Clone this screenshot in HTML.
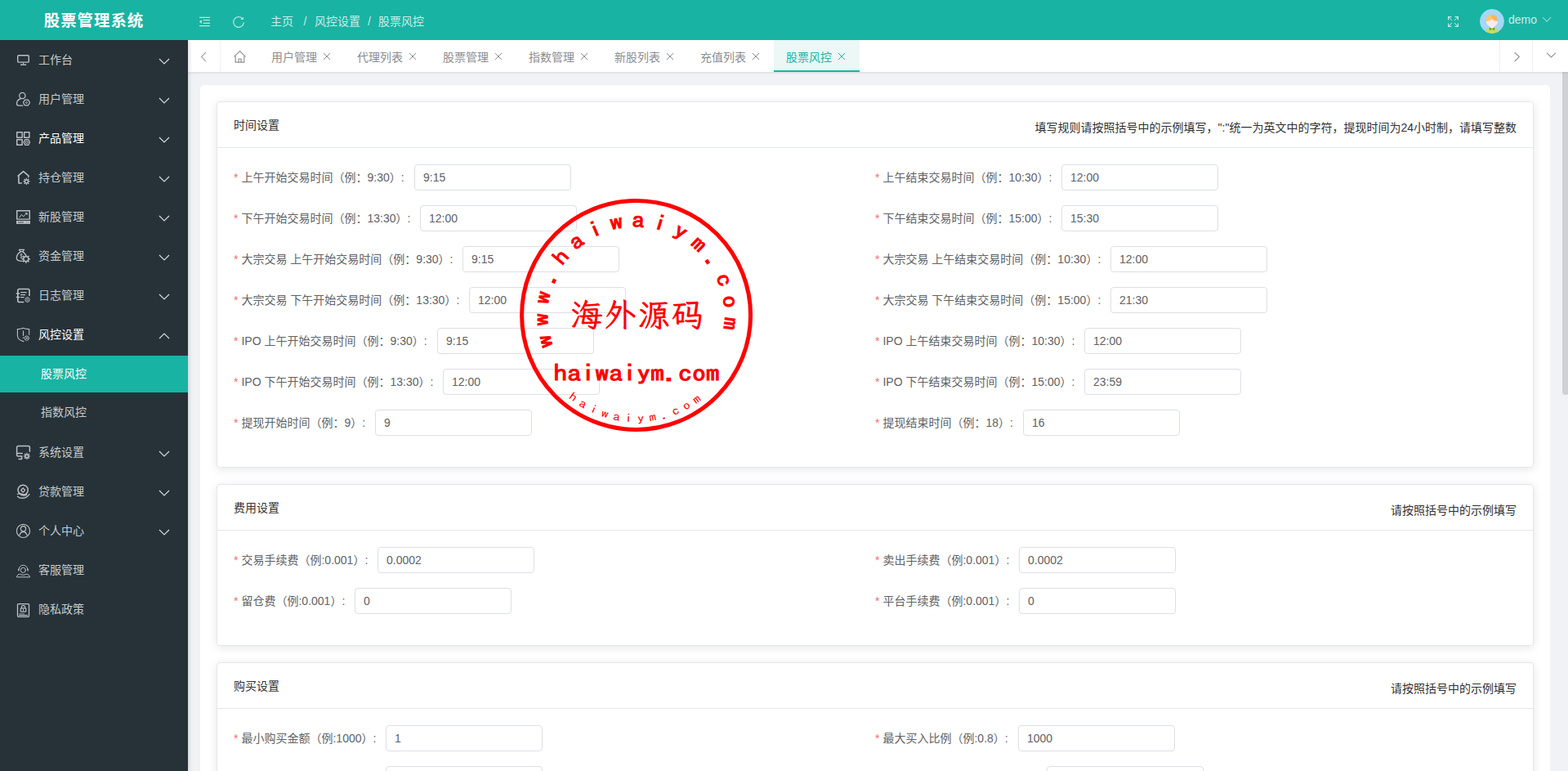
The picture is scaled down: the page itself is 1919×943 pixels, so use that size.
<!DOCTYPE html>
<html lang="zh-CN">
<head>
<meta charset="utf-8">
<title>股票管理系统</title>
<style>
*{box-sizing:border-box;margin:0;padding:0}
html,body{width:1919px;height:943px;overflow:hidden;background:#f1f2f6;font-family:"Liberation Sans","Noto Sans CJK SC",sans-serif;font-size:14px;color:#606266}
ul{list-style:none}
/* header */
.navbar{position:absolute;left:0;top:0;width:1919px;height:49px;background:#19b3a3;color:#fff;z-index:30}
.brand{position:absolute;left:0;top:0;width:230px;height:49px;line-height:51px;text-align:center;font-size:19.4px;font-weight:700;letter-spacing:1px;color:#fff}
.nav-ico{position:absolute}
.crumb{position:absolute;left:331px;top:0;height:49px;line-height:52px;font-size:14px;color:rgba(255,255,255,.78);white-space:nowrap}
.crumb i{font-style:normal;margin:0 9px 0 12px}
.user{position:absolute;left:1846px;top:0;line-height:48px;font-size:14px;color:rgba(255,255,255,.78)}
.avatar{position:absolute;left:1811px;top:11px;width:30px;height:30px;border-radius:50%;overflow:hidden}
/* sidebar */
.sidebar{position:absolute;left:0;top:49px;width:230px;height:894px;background:#263238;z-index:20;box-shadow:1px 0 5px rgba(0,21,41,.18)}
.menu li.item{position:relative;height:48px;line-height:48px;color:#c6cacd;font-size:14px;padding-left:47px;white-space:nowrap}
.menu li.item.hl{color:#fff}
.menu li.item svg.ic{position:absolute;left:14px;top:9px;width:30px;height:30px}
.menu li.item svg.ar{position:absolute;left:194.2px;top:22px;width:14px;height:8px;overflow:visible}
.menu li.sub{height:45px;line-height:45px;margin:2px 0;padding-left:50px;color:#c6cacd;font-size:14px}
.menu li.sub.active{background:#19b3a3;color:#fff}
/* tabs */
.tabs{position:absolute;left:230px;top:49px;width:1689px;height:39px;background:#fff;box-shadow:0 1px 3px rgba(0,0,0,.12);z-index:10}
.tabs .btn{position:absolute;top:0;height:39px}
.tab{position:absolute;top:0;height:39px;line-height:42px;font-size:14px;color:#8a8d92;white-space:nowrap}
.tab .x{display:inline-block;width:10px;height:10px;margin-left:7px;position:relative;top:-.6px}
.tab.active{color:#19b3a3}
.tabbg{position:absolute;left:717px;top:0;width:105px;height:39px;background:#ebf8f6;border-bottom:2px solid #19b3a3}
/* content */
.main{position:absolute;left:245px;top:104px;width:1652px;height:900px;background:#fff;border-radius:5px}
.card{position:absolute;left:20px;width:1612px;background:#fff;border:1px solid #e4e7ed;border-radius:4px;box-shadow:0 2px 12px 0 rgba(0,0,0,.1)}
.card .hd{height:56px;border-bottom:1px solid #e4e7ed;position:relative;color:#303133;font-size:14px}
.card .hd .t{position:absolute;left:20px;top:0;line-height:57px}
.card .hd .r{position:absolute;right:20px;top:0;line-height:62px;color:#303133}
.fi{position:absolute;height:32px;line-height:32px;white-space:nowrap;font-size:14px;color:#606266}
.fi b{font-weight:400;color:#f56c6c;margin-right:4px}
.fi .in{position:absolute;top:0;width:192px;height:32px;border:1px solid #dcdfe6;border-radius:4px;background:#fff;padding-left:10px;line-height:30px;font-size:14px;color:#606266}
.scroll{position:absolute;left:1912px;top:80px;width:8px;height:403px;background:#d0d1d3;border-radius:4px;z-index:5}
.stamp{position:absolute;z-index:50;pointer-events:none;overflow:visible}
</style>
</head>
<body>
<div class="navbar">
  <div class="brand">股票管理系统</div>
  <div class="crumb">主页<i style="margin:0 9.6px 0 12.5px">/</i>风控设置<i style="margin:0 9.1px 0 9px">/</i>股票风控</div>
  <svg class="nav-ico" style="left:243px;top:20px" width="16" height="14" viewBox="0 0 16 14"><path d="M.9 1.3H14M5.7 4.7H14M5.7 8.3H14M.9 11.7H14" stroke="#b4e8e1" stroke-width="1.25"/><path d="M.9 6.55L3.9 4.06V9Z" fill="#b4e8e1"/></svg>
  <svg class="nav-ico" style="left:284px;top:19px" width="16" height="16" viewBox="0 0 16 16"><path d="M14.28 8.9A6.3 6.3 0 1 1 13 4.15" stroke="#b4e8e1" stroke-width="1.25" fill="none" stroke-linecap="round"/><path d="M13.9 1.6V5.1L10.3 4.9Z" fill="#b4e8e1"/></svg>
  <svg class="nav-ico" style="left:1772px;top:20px" width="13" height="13" viewBox="0 0 13 13"><path d="M.6 4.4V.6H4.4M12.4 4.4V.6H8.6M.6 8.6V12.4H4.4M12.4 8.6V12.4H8.6" stroke="#c4ece7" stroke-width="1.2" fill="none"/><path d="M1 1L5 5M12 1L8 5M1 12L5 8M12 12L8 8" stroke="#c4ece7" stroke-width="1" fill="none"/></svg>
  <svg class="nav-ico" style="left:1887px;top:20px" width="12" height="8" viewBox="0 0 12 8"><path d="M1 1.2L6 6.2 11 1.2" stroke="#8edbd2" stroke-width="1.1" fill="none"/></svg>
  <div class="avatar"><svg width="30" height="30" viewBox="0 0 30 30"><circle cx="15" cy="15" r="15" fill="#a4d8f6"/><path d="M6.4 30C6.4 24.8 10 22.4 15 22.4 20 22.4 23.6 24.8 23.6 30Z" fill="#c3dc6c"/><path d="M13 20.4H17V22.6L15 23.6 13 22.6Z" fill="#fff"/><ellipse cx="15" cy="15" rx="7" ry="7" fill="#fde9e7"/><path d="M8 15C7.4 10 10.6 7 15 7 19.4 7 22.6 10 22 15 19.4 14.6 16.6 13.8 15 12 13.4 13.8 10.6 14.6 8 15Z" fill="#f7b65f"/><path d="M8 15C7.4 10 10.6 7 15 7 14.2 9 14.2 10.6 15 12 13.4 13.8 10.6 14.6 8 15Z" fill="#fcc968"/><path d="M11.8 22.6L15 24.2 18.2 22.6V26.2L15 24.8 11.8 26.2Z" fill="#6ea616"/></svg></div>
  <div class="user">demo</div>
</div>
<div class="sidebar">
  <ul class="menu">
    <li class="item"><svg class="ic" viewBox="0 0 30 30"><rect x="7.7" y="9.8" width="13.55" height="8.3" rx="1.2" stroke="#bcc0c3" stroke-width="1.4" fill="none" stroke-linecap="round" stroke-linejoin="round"/><path d="M14.48 18.6V20.8" stroke="#bcc0c3" stroke-width="1.0" fill="none" stroke-linecap="butt" stroke-linejoin="round"/><path d="M11 21.2H18.1" stroke="#bcc0c3" stroke-width="1.4" fill="none" stroke-linecap="butt" stroke-linejoin="round"/></svg><span>工作台</span><svg class="ar" viewBox="0 0 14 8"><path d="M1 1L7 7 13 1" stroke="#d6d9db" stroke-width="1.2" fill="none"/></svg></li>
    <li class="item"><svg class="ic" viewBox="0 0 30 30"><g transform="translate(0,-2)"><circle cx="13.36" cy="13.04" r="3.65" stroke="#bcc0c3" stroke-width="1.3" fill="none" stroke-linecap="round" stroke-linejoin="round"/><path d="M11.4 16.7C8.3 17.8 6.5 20.3 6.5 22.7 6.5 24.3 7.4 25.1 8.8 25.1H13.9" stroke="#bcc0c3" stroke-width="1.3" fill="none" stroke-linecap="round" stroke-linejoin="round"/><polygon points="22.45,21.50 20.45,24.96 16.45,24.96 14.45,21.50 16.45,18.04 20.45,18.04" stroke="#bcc0c3" stroke-width="1.25" fill="none" stroke-linejoin="round"/><circle cx="18.45" cy="21.5" r="1.0" stroke="#bcc0c3" stroke-width="1.0" fill="none"/></g></svg><span>用户管理</span><svg class="ar" viewBox="0 0 14 8"><path d="M1 1L7 7 13 1" stroke="#d6d9db" stroke-width="1.2" fill="none"/></svg></li>
    <li class="item hl"><svg class="ic" viewBox="0 0 30 30"><g transform="translate(0,-2)"><rect x="6.7" y="9.75" width="6.45" height="6.4" stroke="#bcc0c3" stroke-width="1.45" fill="none" stroke-linecap="butt" stroke-linejoin="round"/><rect x="15.65" y="9.75" width="6.25" height="6.4" stroke="#bcc0c3" stroke-width="1.45" fill="none" stroke-linecap="butt" stroke-linejoin="round"/><rect x="6.7" y="18.8" width="6.45" height="6.4" stroke="#bcc0c3" stroke-width="1.45" fill="none" stroke-linecap="butt" stroke-linejoin="round"/><polygon points="22.50,22.00 20.65,25.36 16.95,25.36 15.10,22.00 16.95,18.64 20.65,18.64" stroke="#bcc0c3" stroke-width="1.25" fill="none" stroke-linejoin="round"/><circle cx="18.8" cy="22.0" r="1.5" stroke="#bcc0c3" stroke-width="1.0" fill="none"/></g></svg><span>产品管理</span><svg class="ar" viewBox="0 0 14 8"><path d="M1 1L7 7 13 1" stroke="#d6d9db" stroke-width="1.2" fill="none"/></svg></li>
    <li class="item"><svg class="ic" viewBox="0 0 30 30"><g transform="translate(0,-2)"><path d="M7.6 15.7L14.6 9.7 21.6 15.7" stroke="#bcc0c3" stroke-width="1.6" fill="none" stroke-linecap="butt" stroke-linejoin="round"/><path d="M8.9 15.2V24H12.8" stroke="#bcc0c3" stroke-width="1.6" fill="none" stroke-linecap="butt" stroke-linejoin="round"/><path d="M20.7 15.4V17.2" stroke="#bcc0c3" stroke-width="1.4" fill="none" stroke-linecap="butt" stroke-linejoin="round"/><circle cx="18.45" cy="21.95" r="2.00" stroke="#bcc0c3" stroke-width="1.40" fill="none"/><path d="M20.95 21.95L22.55 21.95M20.22 23.72L21.35 24.85M18.45 24.45L18.45 26.05M16.68 23.72L15.55 24.85M15.95 21.95L14.35 21.95M16.68 20.18L15.55 19.05M18.45 19.45L18.45 17.85M20.22 20.18L21.35 19.05" stroke="#bcc0c3" stroke-width="1.3" stroke-linecap="butt"/></g></svg><span>持仓管理</span><svg class="ar" viewBox="0 0 14 8"><path d="M1 1L7 7 13 1" stroke="#d6d9db" stroke-width="1.2" fill="none"/></svg></li>
    <li class="item"><svg class="ic" viewBox="0 0 30 30"><g transform="translate(0,-2)"><rect x="6.7" y="9.8" width="15.55" height="10.3" stroke="#bcc0c3" stroke-width="1.45" fill="none" stroke-linecap="butt" stroke-linejoin="round"/><path d="M9.6 18.2L12.5 14.4 14.6 17 18 13.2" stroke="#bcc0c3" stroke-width="1" fill="none"/><path d="M16.4 12.2H19.6V15.4Z" fill="#bcc0c3"/><rect x="6" y="21.95" width="17" height="3.95" fill="#bcc0c3"/><path d="M8.1 23.9H15" stroke="#5b6469" stroke-width="1.2"/><path d="M18 23.9H18.9M20.3 23.9H21.2" stroke="#7d858a" stroke-width="1.2"/></g></svg><span>新股管理</span><svg class="ar" viewBox="0 0 14 8"><path d="M1 1L7 7 13 1" stroke="#d6d9db" stroke-width="1.2" fill="none"/></svg></li>
    <li class="item"><svg class="ic" viewBox="0 0 30 30"><g transform="translate(0,-2)"><path d="M9.3 9.4H15.6L13.9 11.6H11Z" stroke="#bcc0c3" stroke-width="1.1" fill="none" stroke-linecap="round" stroke-linejoin="round" fill="#bcc0c3"/><path d="M11.2 11.9C8.4 13.6 6.3 16.8 6.3 19.6 6.3 22 8 22.9 10.4 23.1L13.2 23.3" stroke="#bcc0c3" stroke-width="1.3" fill="none" stroke-linecap="round" stroke-linejoin="round"/><path d="M13.8 11.9C15.3 12.9 16.5 14.2 17.2 15.6" stroke="#bcc0c3" stroke-width="1.3" fill="none" stroke-linecap="round" stroke-linejoin="round"/><path d="M13.4 15C12.2 14.4 10.8 14.8 10.8 15.9 10.8 17.2 13.4 16.8 13.4 18.2 13.4 19.3 11.8 19.6 10.6 19M12.1 13.8V20" stroke="#bcc0c3" stroke-width=".8" fill="none"/><circle cx="17.8" cy="20.7" r="3.05" stroke="#bcc0c3" stroke-width="1.50" fill="none"/><path d="M21.40 20.70L23.00 20.70M20.35 23.25L21.48 24.38M17.80 24.30L17.80 25.90M15.25 23.25L14.12 24.38M14.20 20.70L12.60 20.70M15.25 18.15L14.12 17.02M17.80 17.10L17.80 15.50M20.35 18.15L21.48 17.02" stroke="#bcc0c3" stroke-width="1.5" stroke-linecap="butt"/></g></svg><span>资金管理</span><svg class="ar" viewBox="0 0 14 8"><path d="M1 1L7 7 13 1" stroke="#d6d9db" stroke-width="1.2" fill="none"/></svg></li>
    <li class="item"><svg class="ic" viewBox="0 0 30 30"><g transform="translate(0,-2)"><path d="M21.95 17.4V11.3C21.95 10.2 21.3 9.55 20.2 9.55H9.6C8.5 9.55 7.8 10.2 7.8 11.3V23.7C7.8 24.8 8.5 25.45 9.6 25.45H14.8" stroke="#bcc0c3" stroke-width="1.6" fill="none" stroke-linecap="round" stroke-linejoin="round"/><path d="M6.3 14.95H9.6M6.3 19.4H9.6" stroke="#bcc0c3" stroke-width="1.5" fill="none" stroke-linecap="round" stroke-linejoin="round"/><path d="M11.2 13.7H18.6M11.2 16.55H17M11.2 19.55H15.6" stroke="#bcc0c3" stroke-width="1.3" fill="none" stroke-linecap="butt" stroke-linejoin="round"/><polygon points="22.47,22.60 21.02,25.11 18.12,25.11 16.67,22.60 18.12,20.09 21.02,20.09" stroke="#bcc0c3" stroke-width="1.0" fill="none" stroke-linejoin="round"/><circle cx="19.57" cy="22.6" r="0.9" stroke="#bcc0c3" stroke-width="0.9" fill="none"/></g></svg><span>日志管理</span><svg class="ar" viewBox="0 0 14 8"><path d="M1 1L7 7 13 1" stroke="#d6d9db" stroke-width="1.2" fill="none"/></svg></li>
    <li class="item hl"><svg class="ic" viewBox="0 0 30 30"><g transform="translate(0,-2)"><path d="M21.65 17.2V10.6C19 10.5 16.6 10 14.5 9.2 12.4 10 10 10.5 7.4 10.6V18.6C7.4 21.8 10.2 24.4 14.9 25.6" stroke="#bcc0c3" stroke-width="1.1" fill="none" stroke-linecap="round" stroke-linejoin="round"/><path d="M14.5 12.5V18.8" stroke="#bcc0c3" stroke-width="1.2" fill="none" stroke-linecap="butt" stroke-linejoin="round"/><path d="M14.5 20.4V21.9" stroke="#bcc0c3" stroke-width="1.2" fill="none" stroke-linecap="butt" stroke-linejoin="round"/><circle cx="18.77" cy="21.6" r="2.65" stroke="#bcc0c3" stroke-width="1.0" fill="none" stroke-linecap="round" stroke-linejoin="round"/><circle cx="18.77" cy="21.6" r="1.05" fill="#bcc0c3"/></g></svg><span>风控设置</span><svg class="ar" viewBox="0 0 14 8"><path d="M1 7L7 1 13 7" stroke="#d6d9db" stroke-width="1.2" fill="none"/></svg></li>
    <li class="sub active">股票风控</li>
    <li class="sub">指数风控</li>
    <li class="item"><svg class="ic" viewBox="0 0 30 30"><g transform="translate(0,-2)"><path d="M22.4 16.2V11.3C22.4 10.2 21.7 9.55 20.6 9.55H8.4C7.3 9.55 6.6 10.2 6.6 11.3V20.4C6.6 21.4 7.2 21.95 8.2 21.95H12.6V25.45H9" stroke="#bcc0c3" stroke-width="1.5" fill="none" stroke-linecap="round" stroke-linejoin="round"/><path d="M6.6 18.45H13.2" stroke="#bcc0c3" stroke-width="1.5" fill="none" stroke-linecap="round" stroke-linejoin="round"/><circle cx="18.9" cy="21.95" r="1.90" stroke="#bcc0c3" stroke-width="1.60" fill="none"/><path d="M21.40 21.95L23.00 21.95M20.67 23.72L21.80 24.85M18.90 24.45L18.90 26.05M17.13 23.72L16.00 24.85M16.40 21.95L14.80 21.95M17.13 20.18L16.00 19.05M18.90 19.45L18.90 17.85M20.67 20.18L21.80 19.05" stroke="#bcc0c3" stroke-width="1.3" stroke-linecap="butt"/></g></svg><span>系统设置</span><svg class="ar" viewBox="0 0 14 8"><path d="M1 1L7 7 13 1" stroke="#d6d9db" stroke-width="1.2" fill="none"/></svg></li>
    <li class="item"><svg class="ic" viewBox="0 0 30 30"><circle cx="14.16" cy="13.3" r="6.1" stroke="#bcc0c3" stroke-width="1.5" fill="none" stroke-linecap="round" stroke-linejoin="round"/><path d="M14.16 10.9L16.6 13.5 14.16 16.1 11.7 13.5Z" stroke="#bcc0c3" stroke-width="1.3" fill="none" stroke-linecap="round" stroke-linejoin="round"/><path d="M7.4 18.4C9.4 17.4 11.6 17.5 13.4 18.2 15 18.8 16.4 18.9 17.6 18.6 18.6 18.3 19 19.3 17.8 19.7 16 20.3 14.2 20 12.4 19.6" stroke="#bcc0c3" stroke-width="1.1" fill="none" stroke-linecap="round" stroke-linejoin="round"/><path d="M7.5 21.2C10.4 24 17.6 24.6 21.8 18.6" stroke="#bcc0c3" stroke-width="1.4" fill="none" stroke-linecap="round" stroke-linejoin="round"/></svg><span>贷款管理</span><svg class="ar" viewBox="0 0 14 8"><path d="M1 1L7 7 13 1" stroke="#d6d9db" stroke-width="1.2" fill="none"/></svg></li>
    <li class="item"><svg class="ic" viewBox="0 0 30 30"><circle cx="14.48" cy="15.44" r="8.1" stroke="#bcc0c3" stroke-width="1.1" fill="none" stroke-linecap="round" stroke-linejoin="round"/><circle cx="14.48" cy="12.8" r="3.1" stroke="#bcc0c3" stroke-width="1.2" fill="none" stroke-linecap="round" stroke-linejoin="round"/><path d="M10 20.6C10.6 18 12.3 16.6 14.48 16.6 16.7 16.6 18.4 18 19 20.6" stroke="#bcc0c3" stroke-width="1.2" fill="none" stroke-linecap="round" stroke-linejoin="round"/></svg><span>个人中心</span><svg class="ar" viewBox="0 0 14 8"><path d="M1 1L7 7 13 1" stroke="#d6d9db" stroke-width="1.2" fill="none"/></svg></li>
    <li class="item"><svg class="ic" viewBox="0 0 30 30"><circle cx="14.3" cy="15.34" r="3.1" stroke="#bcc0c3" stroke-width="1.0" fill="none" stroke-linecap="round" stroke-linejoin="round"/><path d="M9 14.6C9 11.6 11.4 9.3 14.4 9.3 17.4 9.3 19.8 11.6 19.8 14.6" stroke="#bcc0c3" stroke-width="1.0" fill="none" stroke-linecap="round" stroke-linejoin="round"/><ellipse cx="8.75" cy="14.9" rx=".75" ry="1.5" fill="#bcc0c3"/><ellipse cx="20.2" cy="14.9" rx=".75" ry="1.5" fill="#bcc0c3"/><path d="M6.5 23.45C6.9 21.6 8.2 20.3 10.6 20.2 12.2 21.6 16.4 21.6 18.2 20.2 20.6 20.3 22 21.6 22.4 23.45Z" stroke="#bcc0c3" stroke-width="1.0" fill="none" stroke-linecap="round" stroke-linejoin="round"/></svg><span>客服管理</span></li>
    <li class="item"><svg class="ic" viewBox="0 0 30 30"><rect x="7.5" y="8.65" width="14" height="15.7" rx="1" stroke="#bcc0c3" stroke-width="1.3" fill="none" stroke-linecap="round" stroke-linejoin="round"/><rect x="11.2" y="13.8" width="6.6" height="4.4" rx="1" stroke="#bcc0c3" stroke-width="1.2" fill="none" stroke-linecap="round" stroke-linejoin="round"/><path d="M12.3 13.6V12.6C12.3 9.9 16.7 9.9 16.7 12.6V13.6" stroke="#bcc0c3" stroke-width="1.1" fill="none" stroke-linecap="round" stroke-linejoin="round"/><path d="M14.5 15.2V16.8" stroke="#bcc0c3" stroke-width="1.0" fill="none" stroke-linecap="round" stroke-linejoin="round"/><path d="M9.2 20.75H15.9" stroke="#8d9498" stroke-width="1.2"/><path d="M9.2 22.5H19.9" stroke="#bcc0c3" stroke-width="1.1"/></svg><span>隐私政策</span></li>
  </ul>
</div>
<div class="tabs">
  <div class="btn" style="left:0;width:40px;border-right:1px solid #f0f0f0"><svg style="position:absolute;left:15px;top:14px" width="9" height="13" viewBox="0 0 9 13"><path d="M7 1L1.4 6.5 7 12" stroke="#a3a6ab" stroke-width="1.1" fill="none"/></svg></div>
  <div class="btn" style="left:55px;width:17px"><svg style="position:absolute;left:0;top:12px" width="17" height="17" viewBox="0 0 17 17"><path d="M1.4 8.4L8.5 1.6 15.6 8.4M3.2 7.4V15.2H13.8V7.4M7 15.2V11H10V15.2" stroke="#8f9297" stroke-width="1.2" fill="none"/></svg></div>
  <div class="tabbg"></div>
  <div class="tab" style="left:102px">用户管理<svg class="x" viewBox="0 0 10 10"><path d="M1 1L9 9M9 1L1 9" stroke="currentColor" stroke-width="1" fill="none"/></svg></div>
  <div class="tab" style="left:207px">代理列表<svg class="x" viewBox="0 0 10 10"><path d="M1 1L9 9M9 1L1 9" stroke="currentColor" stroke-width="1" fill="none"/></svg></div>
  <div class="tab" style="left:312px">股票管理<svg class="x" viewBox="0 0 10 10"><path d="M1 1L9 9M9 1L1 9" stroke="currentColor" stroke-width="1" fill="none"/></svg></div>
  <div class="tab" style="left:417px">指数管理<svg class="x" viewBox="0 0 10 10"><path d="M1 1L9 9M9 1L1 9" stroke="currentColor" stroke-width="1" fill="none"/></svg></div>
  <div class="tab" style="left:522px">新股列表<svg class="x" viewBox="0 0 10 10"><path d="M1 1L9 9M9 1L1 9" stroke="currentColor" stroke-width="1" fill="none"/></svg></div>
  <div class="tab" style="left:627px">充值列表<svg class="x" viewBox="0 0 10 10"><path d="M1 1L9 9M9 1L1 9" stroke="currentColor" stroke-width="1" fill="none"/></svg></div>
  <div class="tab active" style="left:732px">股票风控<svg class="x" viewBox="0 0 10 10"><path d="M1 1L9 9M9 1L1 9" stroke="currentColor" stroke-width="1" fill="none"/></svg></div>
  <div class="btn" style="left:1605px;width:40px;border-left:1px solid #f0f0f0"><svg style="position:absolute;left:16px;top:14px" width="9" height="13" viewBox="0 0 9 13"><path d="M1.6 1L7.4 6.5 1.6 12" stroke="#8f9297" stroke-width="1.1" fill="none"/></svg></div>
  <div class="btn" style="left:1645px;width:44px;border-left:1px solid #f0f0f0"><svg style="position:absolute;left:16px;top:14px" width="13" height="9" viewBox="0 0 13 9"><path d="M1 1.6L6.5 7 12 1.6" stroke="#8f9297" stroke-width="1.1" fill="none"/></svg></div>
</div>
<div class="main">
  <div class="card" style="top:20px;height:448px">
    <div class="hd"><span class="t">时间设置</span><span class="r">填写规则请按照括号中的示例填写，":"统一为英文中的字符，提现时间为24小时制，请填写整数</span></div>
    <div class="fi" style="left:20px;top:76px"><b>*</b>上午开始交易时间（例：9:30）:<span class="in" style="left:221px">9:15</span></div>
    <div class="fi" style="left:805px;top:76px"><b>*</b>上午结束交易时间（例：10:30）:<span class="in" style="left:228px">12:00</span></div>
    <div class="fi" style="left:20px;top:126px"><b>*</b>下午开始交易时间（例：13:30）:<span class="in" style="left:228px">12:00</span></div>
    <div class="fi" style="left:805px;top:126px"><b>*</b>下午结束交易时间（例：15:00）:<span class="in" style="left:228px">15:30</span></div>
    <div class="fi" style="left:20px;top:176px"><b>*</b>大宗交易 上午开始交易时间（例：9:30）:<span class="in" style="left:280px">9:15</span></div>
    <div class="fi" style="left:805px;top:176px"><b>*</b>大宗交易 上午结束交易时间（例：10:30）:<span class="in" style="left:288px">12:00</span></div>
    <div class="fi" style="left:20px;top:226px"><b>*</b>大宗交易 下午开始交易时间（例：13:30）:<span class="in" style="left:288px">12:00</span></div>
    <div class="fi" style="left:805px;top:226px"><b>*</b>大宗交易 下午结束交易时间（例：15:00）:<span class="in" style="left:288px">21:30</span></div>
    <div class="fi" style="left:20px;top:276px"><b>*</b>IPO 上午开始交易时间（例：9:30）:<span class="in" style="left:249px">9:15</span></div>
    <div class="fi" style="left:805px;top:276px"><b>*</b>IPO 上午结束交易时间（例：10:30）:<span class="in" style="left:256px">12:00</span></div>
    <div class="fi" style="left:20px;top:326px"><b>*</b>IPO 下午开始交易时间（例：13:30）:<span class="in" style="left:256px">12:00</span></div>
    <div class="fi" style="left:805px;top:326px"><b>*</b>IPO 下午结束交易时间（例：15:00）:<span class="in" style="left:256px">23:59</span></div>
    <div class="fi" style="left:20px;top:376px"><b>*</b>提现开始时间（例：9）:<span class="in" style="left:173px">9</span></div>
    <div class="fi" style="left:805px;top:376px"><b>*</b>提现结束时间（例：18）:<span class="in" style="left:181px">16</span></div>
  </div>
  <div class="card" style="top:488px;height:198px">
    <div class="hd"><span class="t">费用设置</span><span class="r">请按照括号中的示例填写</span></div>
    <div class="fi" style="left:20px;top:76px"><b>*</b>交易手续费（例:0.001）:<span class="in" style="left:176px">0.0002</span></div>
    <div class="fi" style="left:805px;top:76px"><b>*</b>卖出手续费（例:0.001）:<span class="in" style="left:176px">0.0002</span></div>
    <div class="fi" style="left:20px;top:126px"><b>*</b>留仓费（例:0.001）:<span class="in" style="left:148px">0</span></div>
    <div class="fi" style="left:805px;top:126px"><b>*</b>平台手续费（例:0.001）:<span class="in" style="left:176px">0</span></div>
  </div>
  <div class="card" style="top:706px;height:400px">
    <div class="hd"><span class="t">购买设置</span><span class="r">请按照括号中的示例填写</span></div>
    <div class="fi" style="left:20px;top:76px"><b>*</b>最小购买金额（例:1000）:<span class="in" style="left:186px">1</span></div>
    <div class="fi" style="left:805px;top:76px"><b>*</b>最大买入比例（例:0.8）:<span class="in" style="left:175px">1000</span></div>
    <div class="fi" style="left:20px;top:126px"><span class="in" style="left:186px"></span></div>
    <div class="fi" style="left:805px;top:126px"><span class="in" style="left:210px"></span></div>
  </div>
</div>
<div class="scroll"></div>
<svg class="stamp" style="left:628px;top:235px" width="300" height="300" viewBox="0 0 300 300">
  <defs>
    <path id="arcTop" d="M50.36 187.93A107.0 107.0 0 1 1 58.38 204.77"/>
    <path id="arcBot" d="M67.24 251.95A131.3 131.3 0 0 0 280.13 171.97"/>
  </defs>
  <circle cx="150.6" cy="150.5" r="140" fill="none" stroke="#f00" stroke-width="5"/>
  <text font-family="IPAGothic,'Liberation Mono',monospace" font-weight="700" font-size="26" fill="#f00" letter-spacing="7.85"><textPath href="#arcTop" textLength="400.4" lengthAdjust="spacingAndGlyphs">www.haiwaiym.com</textPath></text>
  <text x="152.79999999999995" y="163.8" text-anchor="middle" font-family="'Liberation Serif','LXGW WenKai TC','Noto Serif CJK SC',serif" font-weight="700" font-size="39.5" fill="#f00" letter-spacing="1.8">海外源码</text>
  <text x="49.3" y="231.3" font-family="IPAGothic,'Liberation Mono',monospace" font-weight="700" font-size="26.5" fill="#f00" textLength="203.5" lengthAdjust="spacingAndGlyphs">haiwaiym.com</text>
  <text font-family="IPAGothic,'Liberation Mono',monospace" font-size="14" fill="#f00" letter-spacing="5.21"><textPath href="#arcBot" textLength="183.1" lengthAdjust="spacingAndGlyphs">haiwaiym.com</textPath></text>
</svg>
</body>
</html>
